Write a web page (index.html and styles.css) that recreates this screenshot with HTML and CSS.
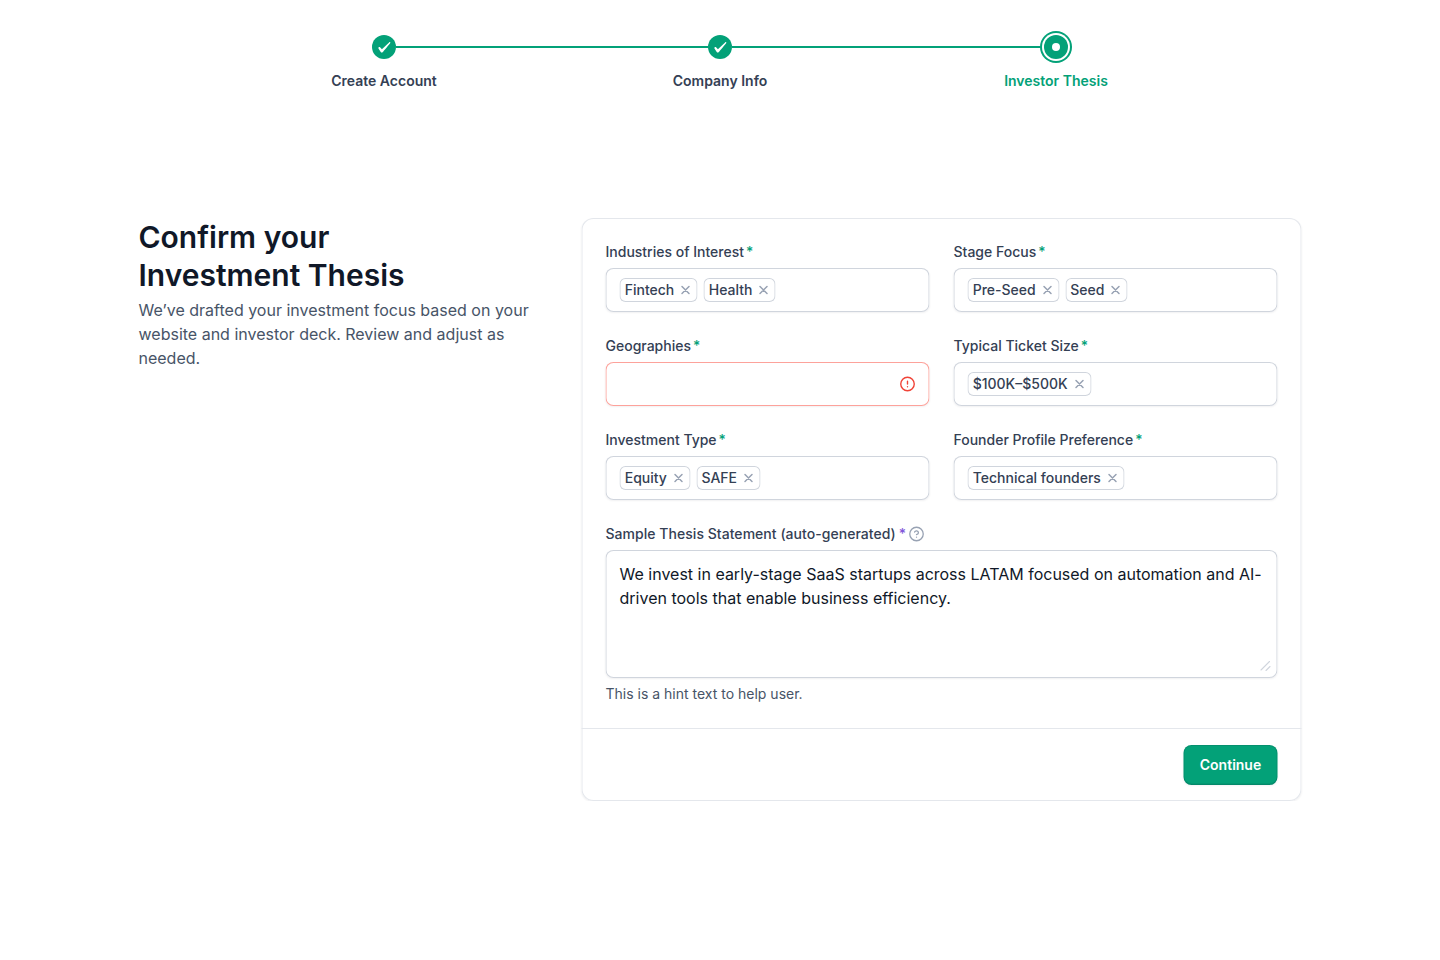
FILE: index.html
```
<!DOCTYPE html>
<html lang="en">
<head>
<meta charset="utf-8">
<title>Investor Thesis</title>
<link rel="stylesheet" href="styles.css">
</head>
<body>
<svg class="defs" width="0" height="0">
  <symbol id="x" viewBox="0 0 12 12"><path d="M9.5 2.5l-7 7M2.5 2.5l7 7" fill="none" stroke="currentColor" stroke-width="1.5" stroke-linecap="round"/></symbol>
  <symbol id="check" viewBox="0 0 24 24"><path d="M17.096 7.39L9.936 14.3L8.036 12.27C7.686 11.94 7.136 11.92 6.736 12.2C6.346 12.49 6.236 13 6.476 13.41L8.726 17.07C8.946 17.41 9.326 17.62 9.756 17.62C10.166 17.62 10.556 17.41 10.776 17.07C11.136 16.6 18.006 8.41 18.006 8.41C18.906 7.49 17.816 6.68 17.096 7.38Z" fill="#fff"/></symbol>
</svg>

<nav class="stepper">
  <div class="step">
    <div class="dot"><svg width="24" height="24"><use href="#check"/></svg></div>
    <span class="step-label">Create Account</span>
  </div>
  <div class="step">
    <div class="dot"><svg width="24" height="24"><use href="#check"/></svg></div>
    <span class="step-label">Company Info</span>
  </div>
  <div class="step current">
    <div class="dot"><i class="pip"></i></div>
    <span class="step-label">Investor Thesis</span>
  </div>
</nav>

<main class="content">
  <section class="intro">
    <h1 class="title">Confirm your<br>Investment Thesis</h1>
    <p class="subtitle">We’ve drafted your investment focus based on your website and investor deck. Review and adjust as needed.</p>
  </section>

  <section class="card">
    <div class="fields">
      <div class="field">
        <div class="label">Industries of Interest<span class="req">*</span></div>
        <div class="input">
          <span class="tag">Fintech<svg class="close"><use href="#x"/></svg></span>
          <span class="tag">Health<svg class="close"><use href="#x"/></svg></span>
        </div>
      </div>
      <div class="field">
        <div class="label">Stage Focus<span class="req">*</span></div>
        <div class="input">
          <span class="tag">Pre-Seed<svg class="close"><use href="#x"/></svg></span>
          <span class="tag">Seed<svg class="close"><use href="#x"/></svg></span>
        </div>
      </div>
      <div class="field">
        <div class="label">Geographies<span class="req">*</span></div>
        <div class="input error">
          <svg class="alert" width="16" height="16" viewBox="0 0 16 16" fill="none" stroke="#f04438" stroke-width="1.4" stroke-linecap="round"><circle cx="8" cy="8" r="6.75"/><path d="M8 5.3V8.1M8 10.7h.01"/></svg>
        </div>
      </div>
      <div class="field">
        <div class="label">Typical Ticket Size<span class="req">*</span></div>
        <div class="input">
          <span class="tag">$100K–$500K<svg class="close"><use href="#x"/></svg></span>
        </div>
      </div>
      <div class="field">
        <div class="label">Investment Type<span class="req">*</span></div>
        <div class="input">
          <span class="tag">Equity<svg class="close"><use href="#x"/></svg></span>
          <span class="tag">SAFE<svg class="close"><use href="#x"/></svg></span>
        </div>
      </div>
      <div class="field">
        <div class="label">Founder Profile Preference<span class="req">*</span></div>
        <div class="input">
          <span class="tag">Technical founders<svg class="close"><use href="#x"/></svg></span>
        </div>
      </div>
      <div class="field wide">
        <div class="label statement">Sample Thesis Statement (auto-generated)<span class="req violet">*</span><svg class="help" width="16" height="16" viewBox="0 0 16 16" fill="none" stroke="#98a2b3" stroke-width="1.3" stroke-linecap="round" stroke-linejoin="round"><circle cx="8" cy="8" r="6.75"/><path d="M6.1 6.1a2 2 0 0 1 3.85.65c0 1.3-1.95 1.85-1.95 1.85M8 11.2h.01"/></svg></div>
        <div class="textarea">We invest in early-stage SaaS startups across LATAM focused on automation and AI-driven tools that enable business efficiency.
          <svg class="grip" width="12" height="12" viewBox="0 0 12 12" stroke="#d0d5dd" stroke-width="1.1" stroke-linecap="round"><path d="M1.5 10L10 1.5M6.5 10.5L10.5 6.5"/></svg>
        </div>
        <div class="hint">This is a hint text to help user.</div>
      </div>
    </div>
    <footer class="actions"><button class="button">Continue</button></footer>
  </section>
</main>
</body>
</html>
```

FILE: styles.css
```
* { box-sizing: border-box; }
body { margin: 0; background: #fff; font-family: Inter, sans-serif; color: #344054; }
.defs { display: block; }
svg { flex: none; }

.stepper { display: grid; grid-template-columns: repeat(3, 336px); justify-content: center; padding-top: 31px; }
.step { position: relative; display: flex; flex-direction: column; align-items: center; padding-top: 4px; }
.step + .step::before { content: ""; position: absolute; top: 15px; right: 180px; width: 312px; height: 2px; background: #03a178; }
.step.current::before { width: 308px; right: 184px; }
.dot { display: flex; align-items: center; justify-content: center; width: 24px; height: 24px; border-radius: 50%; background: #03a178; }
.current .dot { box-shadow: 0 0 0 2px #fff, 0 0 0 4px #03a178; }
.pip { width: 8px; height: 8px; border-radius: 50%; background: #fff; }
.step-label { margin-top: 12px; font-size: 14px; line-height: 20px; font-weight: 600; }
.current .step-label { color: #03a178; }

/* The half-pixel shift centres the odd-width content block. */
.content { display: flex; justify-content: space-between; align-items: flex-start; width: 1163px; margin: 127px 0 0 138px; transform: translateX(.5px); }
.intro { width: 400px; }
.title { margin: 0 0 4px; font-size: 30px; line-height: 38px; font-weight: 600; color: #101828; }
.subtitle { margin: 0; font-size: 16px; line-height: 24px; color: #475467; }

.card { width: 720px; border-radius: 12px; background: #fff; box-shadow: inset 0 0 0 1px #e4e7ec, 0 1px 2px rgba(16, 24, 40, .06); }
.fields { display: grid; grid-template-columns: 324px 324px; gap: 24px; padding: 24px; }
.wide { grid-column: 1 / -1; }
.label { display: flex; align-items: center; height: 20px; margin-bottom: 6px; font-size: 14px; line-height: 20px; font-weight: 500; white-space: pre; }
.statement { letter-spacing: .04px; }
.req { margin-left: 2px; color: #03a178; }
.violet { margin-left: 3px; color: #7f56d9; }
.help { margin-left: 2px; }
.input { display: flex; align-items: center; gap: 6px; height: 44px; padding: 0 14px; border: 0; border-radius: 8px; background: #fff; box-shadow: inset 0 0 0 1px #d0d5dd, 0 1px 2px rgba(16, 24, 40, .06); }
.input.error { justify-content: flex-end; box-shadow: inset 0 0 0 1px #fda29b, 0 1px 2px rgba(16, 24, 40, .06); }
.tag { display: flex; align-items: center; gap: 5.4px; height: 24px; padding: 0 6px 0 5.2px; border-radius: 6px; box-shadow: inset 0 0 0 1px #d0d5dd; font-size: 14px; line-height: 20px; font-weight: 500; white-space: nowrap; }
.close { width: 12px; height: 12px; color: #98a2b3; }
.textarea { position: relative; height: 128px; padding: 12px 14px; border-radius: 8px; box-shadow: inset 0 0 0 1px #d0d5dd, 0 1px 2px rgba(16, 24, 40, .06); font-size: 16px; line-height: 24px; color: #101828; }
.grip { position: absolute; right: 6px; bottom: 6px; }
.hint { margin-top: 6px; font-size: 14px; line-height: 20px; color: #475467; }

.actions { display: flex; justify-content: flex-end; padding: 16px 24px; border-top: 1px solid #e4e7ec; }
.button { width: 94px; height: 40px; padding: 0; border: 0; border-radius: 8px; background: #03a178; box-shadow: inset 0 0 0 1px rgba(16, 24, 40, .12), inset 0 -2px 0 rgba(16, 24, 40, .06), 0 1px 2px rgba(16, 24, 40, .05); color: #fff; font: 600 14px/20px Inter, sans-serif; }
```
